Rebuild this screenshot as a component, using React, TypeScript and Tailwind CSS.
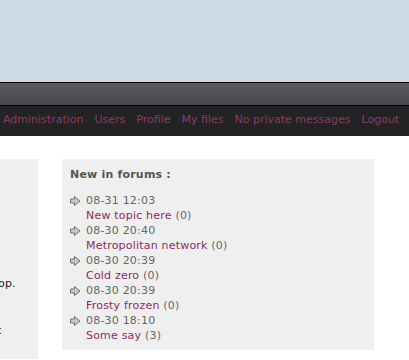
import React from "react";

const navLinks = ["Administration", "Users", "Profile", "My files", "No private messages", "Logout"];

const posts = [
  { date: "08-31 12:03", title: "New topic here", count: 0 },
  { date: "08-30 20:40", title: "Metropolitan network", count: 0 },
  { date: "08-30 20:39", title: "Cold zero", count: 0 },
  { date: "08-30 20:39", title: "Frosty frozen", count: 0 },
  { date: "08-30 18:10", title: "Some say", count: 3 },
];

function Arrow() {
  return (
    <svg width="11" height="10" viewBox="0 0 11 10" className="shrink-0">
      <polygon
        points="0.5,3 4.5,3 4.5,0.5 10,5 4.5,9.5 4.5,7 0.5,7"
        fill="#c5cdb5"
        stroke="#707070"
        strokeWidth="1"
      />
    </svg>
  );
}

export default function App() {
  return (
    <div className="w-[409px] h-[360px] overflow-hidden bg-white font-['DejaVu_Sans',Verdana,sans-serif] text-[11px]">
      <div className="h-[82px] bg-[#cfdae8]" />
      <div className="h-px bg-black" />
      <div className="h-[22px] bg-gradient-to-b from-[#5c5b63] to-[#46454b]" />
      <div className="h-px bg-black" />
      <div className="h-[30px] bg-[#232323] flex items-center gap-[11px] px-[3px] pb-[1px] whitespace-nowrap">
        {navLinks.map((l) => (
          <a key={l} href="#" className="text-[#8c3a68]">
            {l}
          </a>
        ))}
      </div>

      <div className="flex gap-[24px] pt-[23px] tracking-[0.2px]">
        <div className="w-[38px] h-[200px] bg-[#efefef] text-[#222] leading-[13px] pt-[118px] overflow-hidden whitespace-nowrap">
          <div className="-ml-[2px]">op.</div>
          <div className="h-[34px]" />
          <div className="-ml-[3px]">t</div>
          <div className="-ml-[4px] text-[#3a1f4a]">l</div>
        </div>

        <div className="w-[312px] h-[191px] bg-[#efefef] px-[8px] pt-[8px]">
          <div className="font-bold text-[#555] leading-[16px]">New in forums :</div>
          <div className="mt-[10px] leading-[15px]">
            {posts.map((p, i) => (
              <div key={i}>
                <div className="flex items-center gap-[5px] text-[#666]">
                  <Arrow />
                  <span>{p.date}</span>
                </div>
                <div className="pl-[16px]">
                  <a href="#" className="text-[#8c2a62]">
                    {p.title}
                  </a>{" "}
                  <span className="text-[#666]">({p.count})</span>
                </div>
              </div>
            ))}
          </div>
        </div>
      </div>
    </div>
  );
}
